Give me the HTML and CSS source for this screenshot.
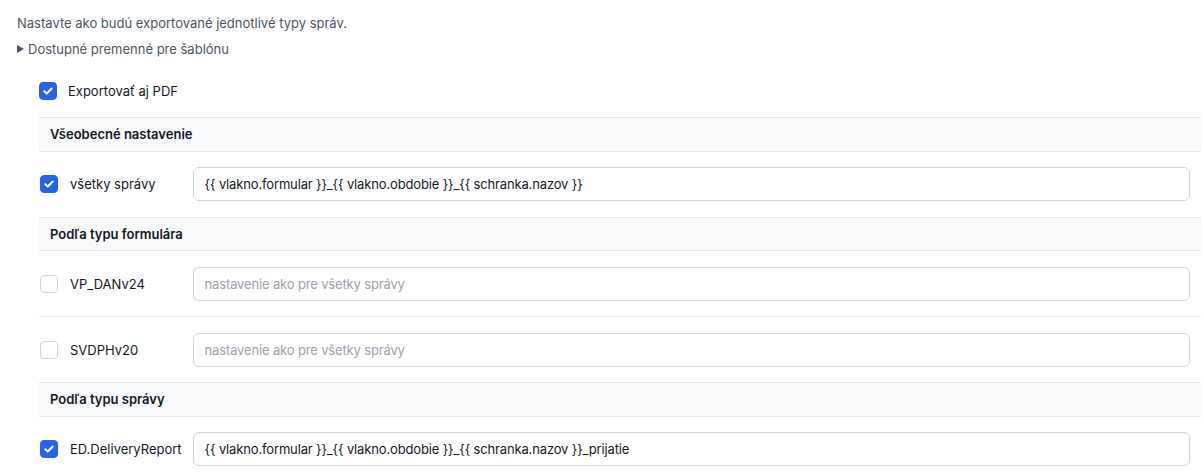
FILE: index.html
```html
<!DOCTYPE html>
<html lang="sk">
<head>
<meta charset="utf-8">
<title>Export správ</title>
<link rel="stylesheet" href="styles.css">
</head>
<body>
<div class="page">
  <p class="intro">Nastavte ako budú exportované jednotlivé typy správ.</p>
  <details class="vars">
    <summary>Dostupné premenné pre šablónu</summary>
  </details>

  <div class="settings">
    <label class="check-row pdf">
      <input type="checkbox" class="cb" checked>
      <span>Exportovať aj PDF</span>
    </label>

    <table class="rules">
      <tbody>
        <tr class="section"><th colspan="2">Všeobecné nastavenie</th></tr>
        <tr class="rule">
          <td class="name"><label class="check-row"><input type="checkbox" class="cb" checked><span>všetky správy</span></label></td>
          <td class="tpl"><input type="text" class="field" value="{{ vlakno.formular }}_{{ vlakno.obdobie }}_{{ schranka.nazov }}"></td>
        </tr>

        <tr class="section"><th colspan="2">Podľa typu formulára</th></tr>
        <tr class="rule">
          <td class="name"><label class="check-row"><input type="checkbox" class="cb"><span>VP_DANv24</span></label></td>
          <td class="tpl"><input type="text" class="field" placeholder="nastavenie ako pre všetky správy"></td>
        </tr>
        <tr class="rule">
          <td class="name"><label class="check-row"><input type="checkbox" class="cb"><span>SVDPHv20</span></label></td>
          <td class="tpl"><input type="text" class="field" placeholder="nastavenie ako pre všetky správy"></td>
        </tr>

        <tr class="section"><th colspan="2">Podľa typu správy</th></tr>
        <tr class="rule">
          <td class="name"><label class="check-row"><input type="checkbox" class="cb" checked><span>ED.DeliveryReport</span></label></td>
          <td class="tpl"><input type="text" class="field" value="{{ vlakno.formular }}_{{ vlakno.obdobie }}_{{ schranka.nazov }}_prijatie"></td>
        </tr>
      </tbody>
    </table>
  </div>
</div>
</body>
</html>
```

FILE: styles.css
```css
* { box-sizing: border-box; }

html, body {
  margin: 0;
  background: #fff;
}

body {
  font-family: Inter, "Noto Sans", "Liberation Sans", sans-serif;
  font-size: 13px;
  color: #111827;
}

.page {
  padding: 14px 3px 0 17px;
}

.intro {
  margin: 0;
  line-height: 18px;
  color: #4b5563;
}

.vars {
  margin-top: 8px;
  color: #4b5563;
  line-height: 18px;
}

.vars summary {
  cursor: pointer;
  list-style: none;
  display: flex;
  align-items: center;
  gap: 4px;
}

.vars summary::-webkit-details-marker { display: none; }

.vars summary::before {
  content: "";
  width: 0;
  height: 0;
  border-top: 4px solid transparent;
  border-bottom: 4px solid transparent;
  border-left: 7px solid #4b5563;
}

.settings {
  margin-left: 22px;
  margin-top: 24px;
}

.check-row {
  display: flex;
  align-items: center;
  gap: 12px;
  white-space: nowrap;
  cursor: pointer;
}

.pdf {
  gap: 11px;
  height: 18px;
  margin-bottom: 17px;
}

.cb {
  appearance: none;
  -webkit-appearance: none;
  margin: 0;
  width: 18px;
  height: 18px;
  flex: none;
  border: 1px solid #d1d5db;
  border-radius: 4px;
  background: #fff;
}

.cb:checked {
  background-color: #2563eb;
  border-color: #2563eb;
  background-image: url("data:image/svg+xml,%3Csvg xmlns='http://www.w3.org/2000/svg' viewBox='0 0 16 16'%3E%3Cpath d='M4.3 8.3l2.4 2.3 5-5' fill='none' stroke='white' stroke-width='2.1' stroke-linecap='round' stroke-linejoin='round'/%3E%3C/svg%3E");
  background-size: 100% 100%;
}

.rules {
  width: 100%;
  border-collapse: collapse;
}

.section th {
  text-align: left;
  font-weight: 600;
  background: #f9fafb;
  height: 33.5px;
  padding: 0 11px;
  border-top: 1px solid #e5e7eb;
  border-bottom: 1px solid #e5e7eb;
}

.rule td {
  height: 66px;
  padding: 0;
  border-bottom: 1px solid #e5e7eb;
}

.rule .name {
  width: 1%;
  padding: 0 11px 0 1px;
}

.rule .tpl {
  padding: 0 11px 0 0;
}

.field {
  display: block;
  width: 100%;
  height: 34px;
  padding: 0 11px;
  border: 1px solid #d1d5db;
  border-radius: 6px;
  font: inherit;
  letter-spacing: -0.15px;
  color: #111827;
  background: #fff;
  outline: none;
}

.field::placeholder {
  color: #9ca3af;
}
```
